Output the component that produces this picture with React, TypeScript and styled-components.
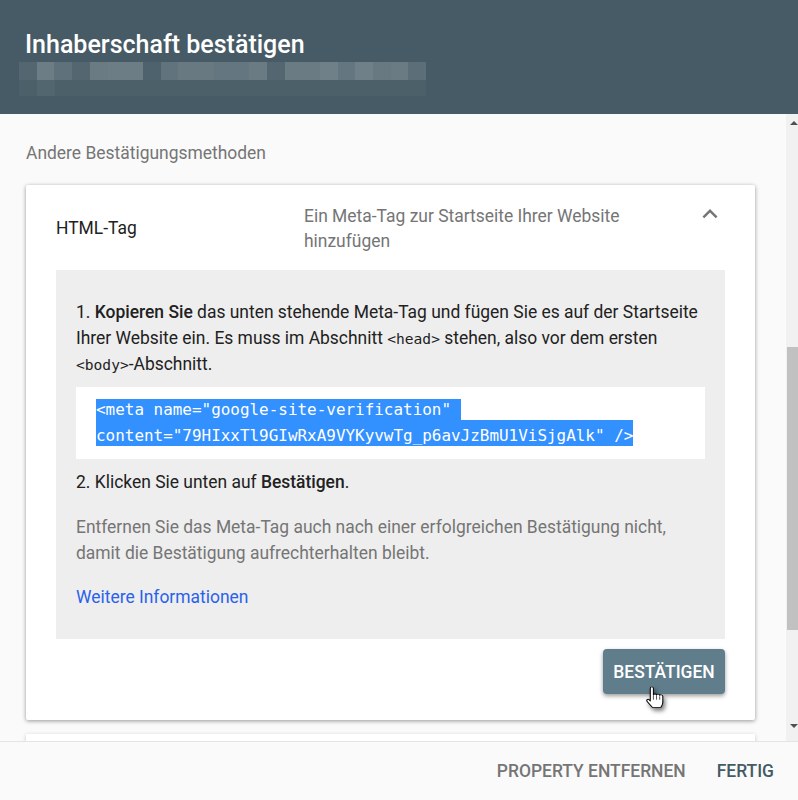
import React from 'react';
import styled, { createGlobalStyle } from 'styled-components';

const GlobalStyle = createGlobalStyle`
  html, body {
    margin: 0;
    padding: 0;
    background: #fafafa;
    font-family: Roboto, "Liberation Sans", sans-serif;
  }
`;

// pixelated address in the header, one value per 18px block
const blurBlocks = [0.1, 0.28, 0.18, 0.1, 0.26, 0.28, 0.28, 0.06, 0.2, 0.24, 0.24, 0.22, 0.22, 0.26, 0.1, 0.26, 0.26, 0.3, 0.22, 0.3, 0.24, 0.26, 0.16];

const App = () => {
  return (
    <Dialog>
      <GlobalStyle />
      <Header>
        <Title>Inhaberschaft bestätigen</Title>
        <BlurLine>
          {blurBlocks.map((o, i) => (
            <BlurBlock key={i} style={{ opacity: o }} />
          ))}
        </BlurLine>
        <BlurLineFaint>
          <BlurSpot />
        </BlurLineFaint>
      </Header>
      <Middle>
        <Content>
          <SectionLabel>Andere Bestätigungsmethoden</SectionLabel>
          <Card>
            <CardHead>
              <CardName>HTML-Tag</CardName>
              <CardDesc>Ein Meta-Tag zur Startseite Ihrer Website hinzufügen</CardDesc>
              <Chevron viewBox="0 0 24 24" width="30" height="30">
                <path d="M12 8l-6 6 1.41 1.41L12 10.83l4.59 4.58L18 14z" fill="currentColor" />
              </Chevron>
            </CardHead>
            <Panel>
              <Para>
                1. <b>Kopieren Sie</b> das unten stehende Meta-Tag und fügen Sie es auf der Startseite
                Ihrer Website ein. Es muss im Abschnitt <Code>&lt;head&gt;</Code> stehen, also vor dem ersten{' '}
                <Code>&lt;body&gt;</Code>-Abschnitt.
              </Para>
              <CodeBox>
                <Selected>&lt;meta name="google-site-verification" </Selected>
                <Selected>content="79HIxxTl9GIwRxA9VYKyvwTg_p6avJzBmU1ViSjgAlk" /&gt;</Selected>
              </CodeBox>
              <Para>
                2. Klicken Sie unten auf <b>Bestätigen</b>.
              </Para>
              <Note>
                Entfernen Sie das Meta-Tag auch nach einer erfolgreichen Bestätigung nicht,
                damit die Bestätigung aufrechterhalten bleibt.
              </Note>
              <MoreLink>Weitere Informationen</MoreLink>
            </Panel>
            <CardActions>
              <ConfirmButton>
                BESTÄTIGEN
                <HandCursor viewBox="0 0 22 28" width="23" height="24" preserveAspectRatio="none">
                  <path
                    d="M6 2.500c0-2 3-2 3 0v8c0-1.600 3-1.600 3 0 0-1.400 3-1.400 3 .5 0-1.200 3-1 3 1v7c0 3-1 4-2 6H8c-1-2-3-4-5-7-1-1.500.5-3.500 2-2l1 1.500z"
                    fill="#fff"
                    stroke="#000"
                    strokeWidth="1"
                    strokeLinejoin="round"
                  />
                  <path d="M9 11v5M12 11v5M15 12v4" stroke="#000" strokeWidth="0.7" fill="none" />
                </HandCursor>
              </ConfirmButton>
            </CardActions>
          </Card>
          <NextCard />
        </Content>
        <ScrollBar>
          <ArrowUp />
          <Thumb />
          <ArrowDown />
        </ScrollBar>
      </Middle>
      <Footer>
        <FooterButton>PROPERTY ENTFERNEN</FooterButton>
        <FooterButton $primary>FERTIG</FooterButton>
      </Footer>
    </Dialog>
  );
};

export default App;

const Dialog = styled.div`
  width: 798px;
  height: 800px;
  display: flex;
  flex-direction: column;
  overflow: hidden;
  background: #fafafa;
`;

const Header = styled.header`
  height: 114px;
  box-sizing: border-box;
  padding: 30px 0 0 25px;
  background: #475b66;
  flex-shrink: 0;
`;

const Title = styled.h1`
  margin: 0;
  font-size: 25px;
  line-height: 30px;
  font-weight: 500;
  color: #fff;
`;

const BlurLine = styled.div`
  display: flex;
  margin: 2px 0 0 -6px;
  width: 407px;
  height: 18px;
  filter: blur(0.5px);
`;

const BlurBlock = styled.div`
  flex: 1;
  background: #cfd8dc;
`;

const BlurLineFaint = styled.div`
  margin-left: -6px;
  width: 407px;
  height: 16px;
  background: #4c606a;
`;

const BlurSpot = styled.div`
  width: 18px;
  height: 16px;
  margin-left: 18px;
  background: #52666f;
`;

const Middle = styled.div`
  flex: 1;
  min-height: 0;
  display: flex;
  border-bottom: 1px solid #e4e4e4;
`;

const Content = styled.main`
  flex: 1;
  min-width: 0;
  padding: 28px 31px 0 26px;
  overflow: hidden;
`;

const SectionLabel = styled.div`
  font-size: 17.45px;
  line-height: 22px;
  color: #757575;
  margin-bottom: 21px;
`;

const Card = styled.section`
  background: #fff;
  border-radius: 2px;
  box-shadow: 0 1px 4px rgba(0, 0, 0, 0.4);
  padding: 0 30px 26px;
`;

const CardHead = styled.div`
  display: flex;
  align-items: flex-start;
  height: 85px;
  box-sizing: border-box;
  padding-top: 19px;
`;

const CardName = styled.div`
  width: 248px;
  font-size: 17.45px;
  line-height: 25px;
  color: #212121;
  margin-top: 12px;
`;

const CardDesc = styled.div`
  width: 340px;
  font-size: 17.45px;
  line-height: 25px;
  color: #757575;
`;

const Chevron = styled.svg`
  margin: -5px 0 0 51px;
  flex-shrink: 0;
  color: #757575;
`;

const Panel = styled.div`
  background: #eee;
  height: 369px;
  box-sizing: border-box;
  padding: 29px 20px 0;
`;

const Para = styled.p`
  margin: 0;
  font-size: 17.45px;
  line-height: 26px;
  color: #212121;

  b {
    font-weight: 500;
  }
`;

const Code = styled.code`
  font-family: "DejaVu Sans Mono", monospace;
  font-size: 14.6px;
  line-height: 0;
`;

const CodeBox = styled.div`
  margin: 10px 0;
  background: #fff;
  height: 72px;
  box-sizing: border-box;
  padding: 12px 20px 0;
  font-family: "DejaVu Sans Mono", monospace;
  font-size: 15.95px;
  white-space: pre;
`;

const Selected = styled.div`
  width: fit-content;
  line-height: 21px;
  background: #3390ff;
  color: #fff;

  & + & {
    padding-top: 5px;
  }
`;

const Note = styled.p`
  margin: 20px 0 0;
  font-size: 17.45px;
  line-height: 25.5px;
  color: #757575;
`;

const MoreLink = styled.a`
  display: block;
  margin-top: 18px;
  font-size: 17.45px;
  line-height: 26px;
  color: #2a62ea;
`;

const CardActions = styled.div`
  display: flex;
  justify-content: flex-end;
  padding-top: 10px;
`;

const ConfirmButton = styled.button`
  position: relative;
  width: 122px;
  height: 45px;
  padding: 0;
  border: none;
  border-radius: 4px;
  background: #607d8b;
  color: #fff;
  font-family: inherit;
  font-size: 17.45px;
  font-weight: 500;
  box-shadow: 0 2px 4px rgba(0, 0, 0, 0.4);
`;

const HandCursor = styled.svg`
  position: absolute;
  left: 41px;
  top: 37px;
  filter: drop-shadow(2px 3px 2px rgba(0, 0, 0, 0.5));
`;

const NextCard = styled.div`
  margin-top: 14px;
  height: 30px;
  background: #fff;
  box-shadow: 0 1px 4px rgba(0, 0, 0, 0.2);
`;

const ScrollBar = styled.div`
  width: 12px;
  flex-shrink: 0;
  display: flex;
  flex-direction: column;
  align-items: flex-end;
  background: #f1f1f1;
`;

const ArrowUp = styled.div`
  width: 0;
  height: 0;
  margin: 7px 0 0;
  align-self: flex-start;
  margin-left: 4px;
  border-left: 4px solid transparent;
  border-right: 4px solid transparent;
  border-bottom: 4px solid #505050;
`;

const Thumb = styled.div`
  width: 11px;
  height: 283px;
  margin-top: 222px;
  background: #c1c1c1;
`;

const ArrowDown = styled.div`
  width: 0;
  height: 0;
  margin-top: 94px;
  align-self: flex-start;
  margin-left: 4px;
  border-left: 4px solid transparent;
  border-right: 4px solid transparent;
  border-top: 4px solid #505050;
`;

const Footer = styled.footer`
  height: 58px;
  flex-shrink: 0;
  display: flex;
  align-items: center;
  justify-content: flex-end;
  gap: 31px;
  padding: 0 24px 0 0;
  background: #fafafa;
`;

const FooterButton = styled.button<{ $primary?: boolean }>`
  padding: 0;
  border: none;
  background: none;
  font-family: inherit;
  font-size: 17.45px;
  font-weight: 500;
  color: ${(p) => (p.$primary ? '#455a64' : '#757575')};
`;
